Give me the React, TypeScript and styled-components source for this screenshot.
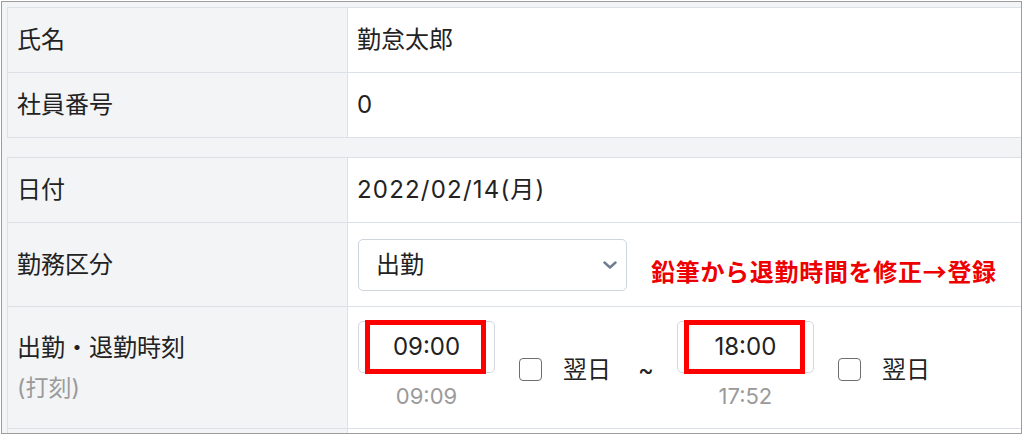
import styled, { createGlobalStyle } from "styled-components";

const GlobalStyle = createGlobalStyle`
  html, body {
    margin: 0;
    padding: 0;
    background: #ffffff;
  }
  body {
    font-family: Inter, "Noto Sans CJK JP", sans-serif;
    color: #222222;
  }
`;

const Frame = styled.div`
  box-sizing: border-box;
  width: 1021px;
  height: 433px;
  margin: 1px 0 0 1px;
  padding: 5px 0 0 5px;
  border: 1px solid #9c9c9c;
  background: #f3f4f6;
  overflow: hidden;
  display: flex;
  flex-direction: column;
  gap: 19px;
`;

const Section = styled.div`
  display: grid;
  grid-template-columns: 340px 1fr;
  border-top: 1px solid #dce1e8;
  border-left: 1px solid #dce1e8;
`;

interface CellProps {
  $height: number;
}

const LabelCell = styled.div<CellProps>`
  box-sizing: border-box;
  height: ${({ $height }) => $height}px;
  padding: 0 9px;
  background: #f3f4f6;
  border-right: 1px solid #dce1e8;
  border-bottom: 1px solid #dce1e8;
  display: flex;
  flex-direction: column;
  justify-content: center;
  gap: 12px;
  font-size: 24px;
  line-height: 28px;
`;

const ValueCell = styled.div<CellProps>`
  box-sizing: border-box;
  height: ${({ $height }) => $height}px;
  padding: 0 9px;
  background: #ffffff;
  border-bottom: 1px solid #dce1e8;
  display: flex;
  align-items: center;
  font-size: 24px;
  line-height: 28px;
`;

const DateText = styled.span`
  letter-spacing: 1.2px;
`;

const SubLabel = styled.span`
  color: #9a9a9a;
  font-size: 23px;
`;

const SelectBox = styled.div`
  box-sizing: border-box;
  width: 269px;
  height: 52px;
  margin-left: 1px;
  padding: 0 9px 0 17px;
  border: 1px solid #cfd5de;
  border-radius: 5px;
  background: #ffffff;
  display: flex;
  align-items: center;
  justify-content: space-between;
`;

const Note = styled.span`
  margin: 12px 0 0 24px;
  color: #ee0000;
  font-family: "Noto Sans CJK JP", sans-serif;
  font-weight: 700;
  font-size: 24px;
  letter-spacing: 0.7px;
`;

const TimeRow = styled.div`
  display: flex;
  align-items: center;
  margin: -4px 0 0 1px;
`;

const TimeGroup = styled.div`
  display: flex;
  flex-direction: column;
  align-items: center;
  gap: 9px;
`;

const TimeInput = styled.div`
  position: relative;
  box-sizing: border-box;
  width: 137px;
  height: 52px;
  border: 1px solid #d2d8e0;
  border-radius: 5px;
  background: #ffffff;
  display: flex;
  align-items: center;
  justify-content: center;
  font-size: 24px;
`;

const Highlight = styled.span`
  position: absolute;
  left: 6px;
  top: -2px;
  width: 121px;
  height: 54px;
  box-sizing: border-box;
  border: 5px solid #ff0000;
`;

const Recorded = styled.span`
  color: #9a9a9a;
  font-size: 22px;
`;

const Checkbox = styled.span`
  box-sizing: border-box;
  width: 23px;
  height: 23px;
  margin: 8px 21px 0 24px;
  border: 1.5px solid #6e6e6e;
  border-radius: 4px;
  background: #ffffff;
`;

const NextDay = styled.span`
  margin-top: 8px;
`;

const Tilde = styled.span`
  margin: 8px 23px 0 27px;
`;

function Chevron() {
  return (
    <svg width="14" height="8" viewBox="0 0 14 8">
      <path d="M1.5 1.5 L7 6.5 L12.5 1.5" fill="none" stroke="#6f7d91" strokeWidth="2.4" strokeLinecap="round" strokeLinejoin="round" />
    </svg>
  );
}

function TimeField({ value, recorded }: { value: string; recorded: string }) {
  return (
    <TimeGroup>
      <TimeInput>
        {value}
        <Highlight />
      </TimeInput>
      <Recorded>{recorded}</Recorded>
    </TimeGroup>
  );
}

export default function App() {
  return (
    <>
      <GlobalStyle />
      <Frame>
        <Section>
          <LabelCell $height={65}>氏名</LabelCell>
          <ValueCell $height={65}>勤怠太郎</ValueCell>
          <LabelCell $height={65}>社員番号</LabelCell>
          <ValueCell $height={65}>0</ValueCell>
        </Section>
        <Section>
          <LabelCell $height={65}>日付</LabelCell>
          <ValueCell $height={65}>
            <DateText>2022/02/14(月)</DateText>
          </ValueCell>
          <LabelCell $height={84}>勤務区分</LabelCell>
          <ValueCell $height={84}>
            <SelectBox>
              出勤
              <Chevron />
            </SelectBox>
            <Note>鉛筆から退勤時間を修正→登録</Note>
          </ValueCell>
          <LabelCell $height={122}>
            <span>出勤・退勤時刻</span>
            <SubLabel>(打刻)</SubLabel>
          </LabelCell>
          <ValueCell $height={122}>
            <TimeRow>
              <TimeField value="09:00" recorded="09:09" />
              <Checkbox />
              <NextDay>翌日</NextDay>
              <Tilde>~</Tilde>
              <TimeField value="18:00" recorded="17:52" />
              <Checkbox />
              <NextDay>翌日</NextDay>
            </TimeRow>
          </ValueCell>
          <LabelCell $height={40} />
          <ValueCell $height={40} />
        </Section>
      </Frame>
    </>
  );
}
